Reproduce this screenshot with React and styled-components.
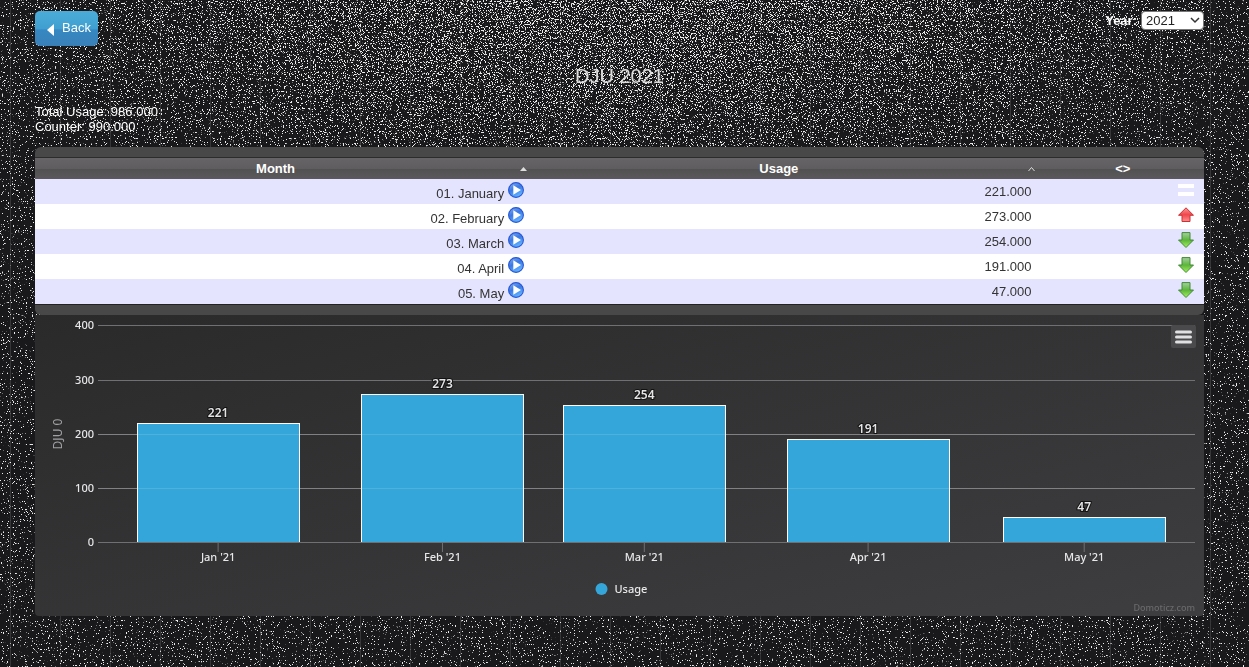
import React from 'react';
import styled, { createGlobalStyle } from 'styled-components';

const GlobalStyle = createGlobalStyle`
  * { box-sizing: border-box; }
  body {
    margin: 0;
    background: #19181b;
    color: #fff;
    font: 13px/15px "Liberation Sans", Arial, sans-serif;
  }
`;

const Backdrop = styled.svg`
  position: fixed;
  inset: 0;
  width: 100%;
  height: 100%;
  z-index: -1;
`;

const Page = styled.main`
  padding: 11px 45px 50px 35px;
`;

const Toolbar = styled.header`
  display: flex;
  justify-content: space-between;
  align-items: flex-start;
`;

const BackButton = styled.button`
  display: flex;
  align-items: center;
  gap: 7px;
  height: 35px;
  padding: 0 7px 2px 11px;
  border: 0;
  border-radius: 5px;
  background: linear-gradient(#4cacd8, #3f9fd0 50%, #3688c2 54%, #3a80b8);
  color: #fff;
  font: inherit;
  svg { margin-top: 5px; }
`;

const YearField = styled.label`
  display: flex;
  align-items: center;
  gap: 4px;
  font-weight: bold;
`;

const SelectWrap = styled.span`
  position: relative;
  display: flex;
  svg { position: absolute; right: 4px; top: 6px; pointer-events: none; }
`;

const YearSelect = styled.select`
  appearance: none;
  width: 63px;
  height: 19px;
  padding: 0 4px;
  border: 1px solid #777;
  border-radius: 4px;
  background: #fff;
  color: #222;
  font: 13px/15px "Liberation Sans", Arial, sans-serif;
`;

const Title = styled.h1`
  margin: 18px 0 16px;
  text-align: center;
  color: #ddd;
  font-size: 20px;
  line-height: 24px;
  font-weight: normal;
`;

const Totals = styled.div`
  margin-bottom: 13px;
`;

const TableCard = styled.section`
  padding: 10px 0;
  border-radius: 6px;
  background: #484848;
`;

const Table = styled.table`
  width: 100%;
  table-layout: fixed;
  border-collapse: separate;
  border-spacing: 0;
  border-bottom: 1px solid #222;
`;

const Head = styled.th`
  position: relative;
  width: ${(p) => p.$width};
  height: 22px;
  padding: 0 ${(p) => (p.$sortable ? 18 : 0)}px 0 0;
  border-top: 1px solid #2c2c2c;
  background: linear-gradient(#666466, #5f5d5f 50%, #525152 52%, #5b595b);
  text-align: center;
  svg { position: absolute; right: 6px; top: 8px; }
`;

const Row = styled.tr`
  height: 25px;
  color: #333;
  background: ${(p) => (p.$striped ? '#e5e4ff' : '#fff')};
`;

const Cell = styled.td`
  padding: 0 10px;
  text-align: right;
`;

const CellLine = styled.div`
  display: flex;
  justify-content: flex-end;
  align-items: center;
  gap: 4px;
  height: 25px;
  padding-bottom: 3px;
`;

const MonthName = styled.span`
  padding-top: 6px;
`;

const ChartCard = styled.section`
  position: relative;
  padding: 10px 9px 0 63px;
  border-radius: 0 0 4px 4px;
  background: linear-gradient(to bottom right, #2a2a2b, #3e3e40);
`;

const Plot = styled.svg`
  display: block;
  width: 100%;
  height: 291px;
  overflow: visible;
  font-family: "Noto Sans", "Open Sans", sans-serif;
  font-size: 11px;
  font-weight: 500;
  fill: #e8e8ea;
`;

const MenuButton = styled.button`
  position: absolute;
  top: 10px;
  right: 8px;
  display: grid;
  place-items: center;
  width: 25px;
  height: 23px;
  padding: 0;
  border: 0;
  border-radius: 2px;
  background: #4a4a4d;
`;

const Triangle = () => (
  <svg width="9" height="12" viewBox="0 0 9 12"><path d="M8 0v12L1 6z" fill="#fff" /></svg>
);

const Play = () => (
  <svg width="16" height="16" viewBox="0 0 16 16">
    <defs>
      <linearGradient id="ball" x1="0" y1="0" x2="0.5" y2="1">
        <stop offset="0" stopColor="#8cb6f4" />
        <stop offset="0.5" stopColor="#3978e4" />
        <stop offset="1" stopColor="#62b4ff" />
      </linearGradient>
    </defs>
    <circle cx="8" cy="8" r="7.4" fill="url(#ball)" stroke="#2855d4" strokeWidth="1.1" />
    <path d="M5.3 3.3v9.4L13 8z" fill="#fff" />
  </svg>
);

const Trend = ({ kind }) => {
  if (kind === 'same') {
    return <svg width="16" height="16" viewBox="0 0 16 16"><path d="M0 2h16v4H0zM0 10h16v4H0z" fill="#fff" /></svg>;
  }
  const up = kind === 'up';
  return (
    <svg width="16" height="16" viewBox="0 0 16 16">
      <defs>
        <linearGradient id={kind} x1="0" y1="0" x2="0" y2="1">
          <stop offset="0" stopColor={up ? '#ff9a9a' : '#a6cfa0'} />
          <stop offset="0.5" stopColor={up ? '#f0474b' : '#5cb53a'} />
          <stop offset="1" stopColor={up ? '#ff8f8f' : '#a4f25e'} />
        </linearGradient>
      </defs>
      <path
        d={up ? 'M8 .8l7.500 7.500H12v6.200H4V8.300H.5z' : 'M8 15.500L.5 8H4V.6h8V8h3.500z'}
        fill={`url(#${kind})`}
        stroke={up ? '#c93236' : '#408a35'}
        strokeWidth="1"
        strokeLinejoin="round"
      />
    </svg>
  );
};

const rows = [
  ['01. January', '221.000', 'same'],
  ['02. February', '273.000', 'up'],
  ['03. March', '254.000', 'down'],
  ['04. April', '191.000', 'down'],
  ['05. May', '47.000', 'down'],
];

const bars = [
  ["Jan '21", 221, 10.95],
  ["Feb '21", 273, 31.4],
  ["Mar '21", 254, 49.8],
  ["Apr '21", 191, 70.2],
  ["May '21", 47, 89.9],
];

const BAR_WIDTH = 14.78;
const BASE = 217;
const yOf = (value) => Math.ceil(BASE - (value * BASE) / 400);

const Speckle = () => (
  <Backdrop aria-hidden="true">
    <defs>
      <radialGradient id="glow" cx="0.5" cy="0" r="0.6" gradientTransform="scale(1 0.6)">
        <stop offset="0" stopColor="#606060" />
        <stop offset="0.4" stopColor="#505050" />
        <stop offset="1" stopColor="#2a2a2a" />
      </radialGradient>
      <filter id="speckle" x="0" y="0" width="100%" height="100%" colorInterpolationFilters="sRGB">
        <feTurbulence type="fractalNoise" baseFrequency="0.83" numOctaves="2" seed="7" />
        <feColorMatrix values="1 0 0 0 0  1 0 0 0 0  1 0 0 0 0  0 0 0 0 1" result="noise" />
        <feComposite in="SourceGraphic" in2="noise" operator="arithmetic" k2="0.5" k3="1" />
        <feColorMatrix values="0 0 0 0 0.93  0 0 0 0 0.93  0 0 0 0 0.93  20 0 0 0 -14.8" />
      </filter>
      <pattern id="stripes" width="50" height="10" patternUnits="userSpaceOnUse">
        <path d="M10 0h1v10h-1z" fill="#aaa" fillOpacity="0.2" />
      </pattern>
    </defs>
    <rect width="100%" height="100%" fill="url(#stripes)" />
    <rect width="100%" height="100%" fill="url(#glow)" filter="url(#speckle)" />
  </Backdrop>
);

export default function App() {
  return (
    <>
      <GlobalStyle />
      <Speckle />
      <Page>
        <Toolbar>
          <BackButton type="button"><Triangle />Back</BackButton>
          <YearField htmlFor="year">
            Year:
            <SelectWrap>
              <YearSelect id="year" defaultValue="2021"><option>2021</option></YearSelect>
              <svg width="10" height="7" viewBox="0 0 10 7"><path d="M1 1l4 4 4-4" fill="none" stroke="#333" strokeWidth="1.5" /></svg>
            </SelectWrap>
          </YearField>
        </Toolbar>
        <Title>DJU 2021</Title>
        <Totals>
          <div>Total Usage: 986.000</div>
          <div>Counter: 990.000</div>
        </Totals>
        <TableCard>
          <Table>
            <thead>
              <tr>
                <Head $width="42.7%" $sortable>
                  Month
                  <svg width="9" height="6" viewBox="0 0 9 6"><path d="M1 5l3.500-4L8 5z" fill="#ddd" /></svg>
                </Head>
                <Head $width="43.4%" $sortable>
                  Usage
                  <svg width="9" height="6" viewBox="0 0 9 6"><path d="M1.500 5l3-3.500 3 3.500" fill="none" stroke="#ddd" /></svg>
                </Head>
                <Head $width="13.9%">&lt;&gt;</Head>
              </tr>
            </thead>
            <tbody>
              {rows.map(([month, usage, trend], i) => (
                <Row key={month} $striped={i % 2 === 0}>
                  <Cell><CellLine><MonthName>{month}</MonthName><Play /></CellLine></Cell>
                  <Cell>{usage}</Cell>
                  <Cell><CellLine><Trend kind={trend} /></CellLine></Cell>
                </Row>
              ))}
            </tbody>
          </Table>
        </TableCard>
        <ChartCard>
          <Plot role="img" aria-label="Usage per month">
            {[0, 100, 200, 300, 400].map((v) => (
              <g key={v}>
                <rect x="0" y={yOf(v)} width="100%" height="1" fill="#707073" />
                <text x="-4" y={yOf(v) + 4} textAnchor="end">{v}</text>
              </g>
            ))}
            <text transform="translate(-36 109) rotate(-90)" textAnchor="middle" fill="#a0a0a3" fontWeight="400" fontSize="12">DJU 0</text>
            {bars.map(([label, value, x]) => (
              <g key={label}>
                <rect x={`${x - BAR_WIDTH / 2}%`} y={yOf(value)} width={`${BAR_WIDTH}%`} height={BASE - yOf(value)} fill="#35a6d9" stroke="#fff" shapeRendering="crispEdges" />
                <text x={`${x}%`} y={yOf(value) - 6} textAnchor="middle" fontSize="12" fontWeight="600" fill="#e4e4e6" stroke="#111" strokeWidth="2" paintOrder="stroke">{value}</text>
                <line x1={`${x}%`} x2={`${x}%`} y1={BASE + 1} y2={BASE + 10} stroke="#707073" />
                <text x={`${x}%`} y={BASE + 19} textAnchor="middle">{label}</text>
              </g>
            ))}
            {[100, 200].map((v) => (
              <rect key={v} x="0" y={yOf(v)} width="100%" height="1" fill="#fff" fillOpacity="0.12" />
            ))}
            <rect x="0" y={BASE} width="100%" height="1" fill="#707073" />
            <svg x="50%" y="255" overflow="visible">
              <circle cx="-45" cy="9" r="6" fill="#35a6d9" />
              <text x="-32" y="13">Usage</text>
            </svg>
            <text x="100%" y="286" textAnchor="end" fontSize="9" fill="#6a6a6c">Domoticz.com</text>
          </Plot>
          <MenuButton type="button" aria-label="Chart menu">
            <svg width="17" height="14" viewBox="0 0 17 14"><path d="M1.500 2h14M1.500 7h14M1.500 12h14" stroke="#e0e0e3" strokeWidth="3" strokeLinecap="round" /></svg>
          </MenuButton>
        </ChartCard>
      </Page>
    </>
  );
}
